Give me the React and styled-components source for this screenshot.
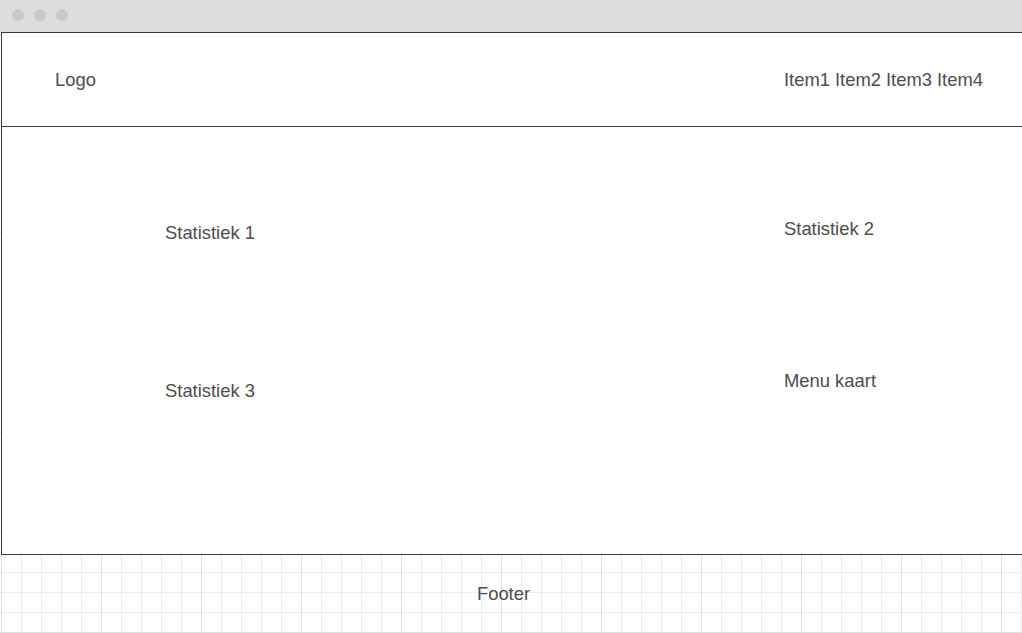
import React from 'react'
import styled, { createGlobalStyle } from 'styled-components'

const Global = createGlobalStyle`
  html, body {
    margin: 0;
    padding: 0;
    background: #ffffff;
  }
  body {
    font-family: "Liberation Sans", Arial, sans-serif;
    color: #4d4d4d;
  }
`

const Window = styled.div`
  width: 1022px;
  height: 633px;
  overflow: hidden;
  display: flex;
  flex-direction: column;
`

const TitleBar = styled.div`
  height: 32px;
  flex-shrink: 0;
  background: #dddddd;
  display: flex;
  align-items: center;
  gap: 10px;
  padding-left: 12px;
  padding-bottom: 2px;
  box-sizing: border-box;
`

const Dot = styled.span`
  width: 12px;
  height: 12px;
  border-radius: 50%;
  background: #c9c9c9;
`

const Canvas = styled.div`
  flex: 1;
  display: flex;
  flex-direction: column;
  background:
    linear-gradient(to right, #dedede 1px, transparent 1px) 1px 0 / 100px 100px,
    linear-gradient(to bottom, #dedede 1px, transparent 1px) 0 0 / 100px 100px,
    linear-gradient(to right, #ececec 1px, transparent 1px) 1px 0 / 20px 20px,
    linear-gradient(to bottom, #ececec 1px, transparent 1px) 0 0 / 20px 20px,
    #ffffff;
`

const Frame = styled.div`
  margin-left: 1px;
  width: 1030px;
  background: #ffffff;
  border-top: 1px solid #3a3a3a;
  border-left: 1px solid #3a3a3a;
  border-bottom: 1px solid #3a3a3a;
`

const Header = styled.header`
  height: 94px;
  box-sizing: border-box;
  padding-top: 1px;
  display: grid;
  grid-template-columns: 782px 1fr;
  align-items: center;
  border-bottom: 1px solid #3a3a3a;
  font-size: 18.4px;
`

const Logo = styled.div`
  padding-left: 53px;
`

const Nav = styled.nav`
  display: flex;
  gap: 5px;
`

const Main = styled.main`
  height: 427px;
  display: grid;
  grid-template-columns: 782px 1fr;
  grid-template-rows: 158px 1fr;
  font-size: 18.4px;
  line-height: 21px;
`

const Cell = styled.div`
  padding-top: ${p => p.$top}px;
  padding-left: ${p => p.$left || 0}px;
`

const Footer = styled.footer`
  flex: 1;
  display: flex;
  align-items: center;
  justify-content: center;
  padding-right: 15px;
  font-size: 18.4px;
`

export default function App() {
  return (
    <Window>
      <Global />
      <TitleBar>
        <Dot />
        <Dot />
        <Dot />
      </TitleBar>
      <Canvas>
        <Frame>
          <Header>
            <Logo>Logo</Logo>
            <Nav>
              <span>Item1</span>
              <span>Item2</span>
              <span>Item3</span>
              <span>Item4</span>
            </Nav>
          </Header>
          <Main>
            <Cell $top={95} $left={163}>Statistiek 1</Cell>
            <Cell $top={91}>Statistiek 2</Cell>
            <Cell $top={95} $left={163}>Statistiek 3</Cell>
            <Cell $top={85}>Menu kaart</Cell>
          </Main>
        </Frame>
        <Footer>Footer</Footer>
      </Canvas>
    </Window>
  )
}
